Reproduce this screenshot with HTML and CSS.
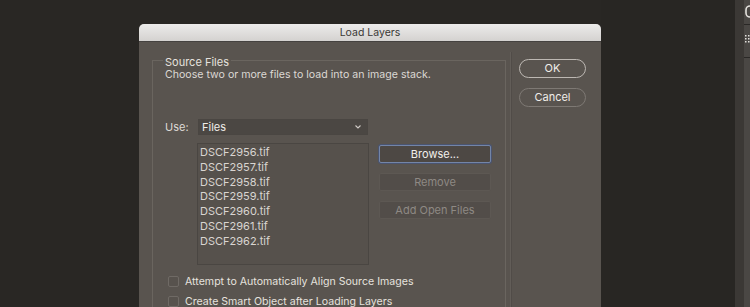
FILE: index.html
```html
<!DOCTYPE html>
<html>
<head>
<meta charset="utf-8">
<link rel="stylesheet" href="styles.css">
</head>
<body>
<div class="screen">
  <div class="desk">
    <div class="dialog">
      <div class="titlebar">Load Layers</div>
      <div class="dbody">
        <fieldset class="group">
          <legend>Source Files</legend>
          <p class="hint">Choose two or more files to load into an image stack.</p>
          <div class="userow">
            <span class="uselabel">Use:</span>
            <div class="select"><span>Files</span>
              <svg width="8" height="6" viewBox="0 0 8 6"><path d="M1.5 1.5 L4 4 L6.5 1.5" fill="none" stroke="#cfcac5" stroke-width="1.1"/></svg>
            </div>
          </div>
          <div class="filesrow">
            <div class="list">
              <div>DSCF2956.tif</div>
              <div>DSCF2957.tif</div>
              <div>DSCF2958.tif</div>
              <div>DSCF2959.tif</div>
              <div>DSCF2960.tif</div>
              <div>DSCF2961.tif</div>
              <div>DSCF2962.tif</div>
            </div>
            <div class="sidebtns">
              <div class="btn focus">Browse...</div>
              <div class="btn dis">Remove</div>
              <div class="btn dis">Add Open Files</div>
            </div>
          </div>
          <label class="check"><span class="box"></span>Attempt to Automatically Align Source Images</label>
          <label class="check"><span class="box"></span>Create Smart Object after Loading Layers</label>
        </fieldset>
        <div class="sep"></div>
        <div class="actions">
          <div class="pill">OK</div>
          <div class="pill sec">Cancel</div>
        </div>
      </div>
    </div>
  </div>
  <div class="gap"></div>
  <div class="panel">
    <div class="pcell top">
      <svg width="6" height="24" viewBox="0 0 6 24"><path d="M6 6 A4 4 0 0 0 2 10 L2 13 A4 4 0 0 0 6 17" fill="none" stroke="#e4e1dd" stroke-width="1.6"/></svg>
    </div>
    <div class="pcell">
      <svg width="6" height="32" viewBox="0 0 6 32"><g fill="#e4e1dd"><rect x="1" y="10" width="1.5" height="1.5"/><rect x="4" y="10" width="1.5" height="1.5"/><rect x="1" y="13" width="1.5" height="1.5"/><rect x="4" y="13" width="1.5" height="1.5"/><rect x="1" y="16" width="1.5" height="1.5"/><rect x="4" y="16" width="1.5" height="1.5"/></g></svg>
    </div>
    <div class="pcell rest"></div>
  </div>
</div>
</body>
</html>
```

FILE: styles.css
```css
html, body {
  margin: 0;
  padding: 0;
  background: #292724;
  font-family: "Inter", "Liberation Sans", sans-serif;
  overflow: hidden;
}
.screen {
  display: flex;
  width: 750px;
  height: 307px;
}
.desk {
  width: 601px;
  padding: 24px 0 0 139px;
  box-sizing: border-box;
}
.gap {
  width: 134px;
  background: #282623;
}
.panel {
  width: 15px;
  display: flex;
  flex-direction: column;
  background: #3b3835;
}
.pcell {
  height: 32px;
  border-bottom: 1px solid #2a2826;
  margin-left: 9px;
  background: #4a4744;
  overflow: hidden;
}
.pcell svg { display: block; }
.pcell.top { height: 24px; }
.pcell.rest { flex: 1; border: 0; }
.dialog {
  width: 462px;
  height: 290px;
  background: #59544f;
  border-radius: 5px 5px 0 0;
  overflow: hidden;
  color: #dedad6;
  font-size: 10.5px;
}
.titlebar {
  height: 17px;
  line-height: 17px;
  text-align: center;
  color: #3a3836;
  background: linear-gradient(#ecebea, #d4d2d0);
  font-size: 10.5px;
  border-bottom: 1px solid #454240;
}
.dbody {
  display: flex;
  padding-top: 10px;
}
.group {
  margin: 0 0 0 13px;
  width: 354px;
  height: 300px;
  box-sizing: border-box;
  border: 1px solid #6a655f;
  padding: 0 0 0 12px;
}
.group legend {
  padding: 0 2px;
  margin-left: -2px;
  font-size: 11px;
  line-height: 16px;
  position: relative;
  top: 2px;
  color: #e6e2de;
}
.hint {
  margin: 0;
  font-size: 10.6px;
  line-height: 14px;
  color: #dcd8d4;
}
.userow {
  display: flex;
  align-items: center;
  margin-top: 37px;
}
.uselabel {
  width: 33px;
  font-size: 11px;
}
.select {
  width: 170px;
  height: 16px;
  background: #4b4743;
  border: 1px solid #4a4642;
  display: flex;
  align-items: center;
  justify-content: space-between;
  padding: 0 5px 0 3px;
  box-sizing: border-box;
  font-size: 11px;
  color: #f0ede9;
}
.filesrow {
  display: flex;
  margin-top: 8px;
  margin-left: 32px;
}
.list {
  width: 172px;
  height: 122px;
  box-sizing: border-box;
  border: 1px solid #4a4642;
  background: #56514c;
  padding: 1px 0 0 2px;
  font-size: 11px;
  line-height: 14.8px;
  color: #d9d5d1;
}
.sidebtns {
  display: flex;
  flex-direction: column;
  gap: 10px;
  margin-left: 10px;
  padding-top: 2px;
}
.btn {
  width: 112px;
  height: 18px;
  box-sizing: border-box;
  line-height: 16px;
  text-align: center;
  font-size: 11px;
  border: 1px solid #5d5853;
  background: #524d49;
  border-radius: 2px;
  color: #8e8984;
}
.btn.focus {
  color: #f2efeb;
  background: #4d4844;
  border: 1px solid #7385a8;
  box-shadow: 0 0 0 1px #4a5470;
}
.check {
  display: flex;
  align-items: center;
  margin-left: 3px;
  height: 20px;
  font-size: 10.6px;
  color: #e6e2de;
}
.filesrow + .check { margin-top: 6px; }
.box {
  width: 9px;
  height: 9px;
  border: 1px solid #6f6a65;
  background: #57524d;
  border-radius: 2px;
  margin-right: 6px;
}
.sep {
  width: 1px;
  margin-left: 4px;
  background: #514c48;
  border-left: 1px solid #625d58;
}
.actions {
  display: flex;
  flex-direction: column;
  gap: 10px;
  margin: 7px 0 0 7px;
}
.pill {
  width: 67px;
  height: 19px;
  box-sizing: border-box;
  border: 1px solid #bdb8b3;
  border-radius: 10px;
  text-align: center;
  line-height: 17px;
  font-size: 11px;
  color: #f0ede9;
}
.pill.sec {
  border-color: #7e7974;
}
```
